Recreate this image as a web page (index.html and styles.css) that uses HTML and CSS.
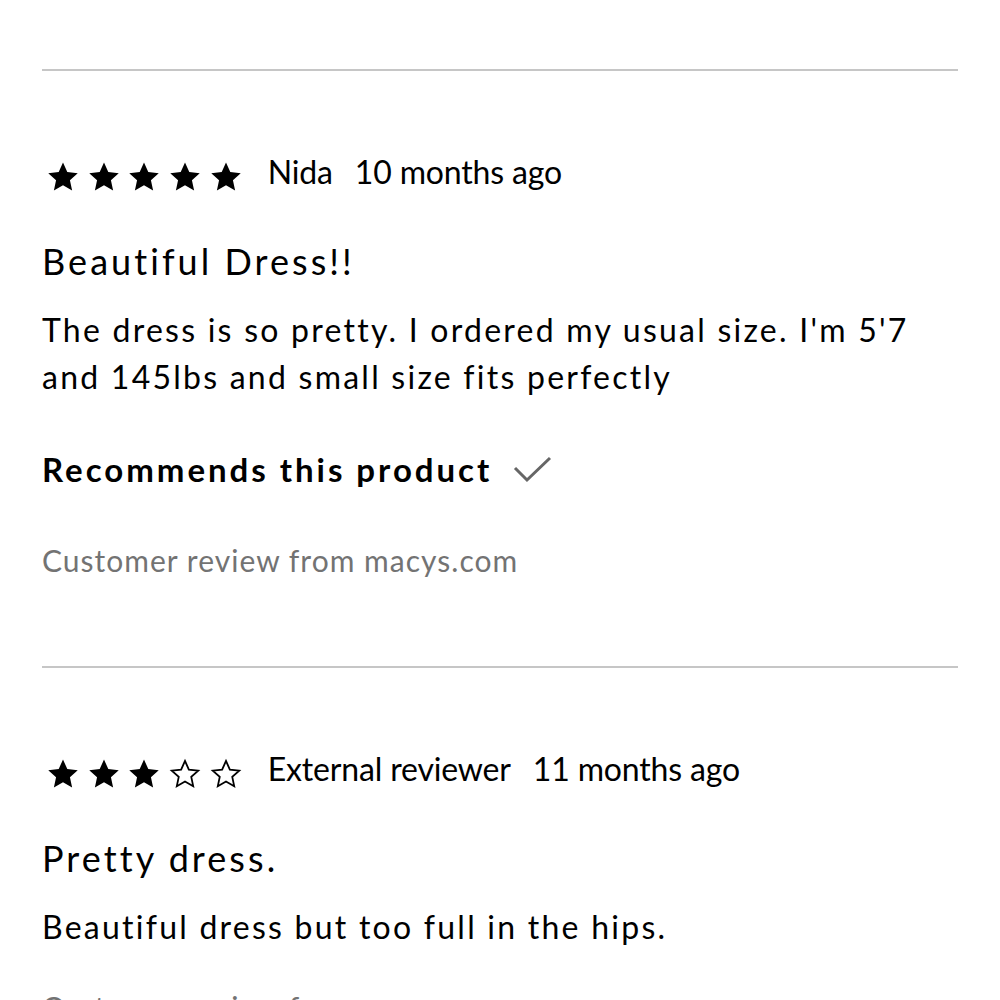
FILE: index.html
```html
<!DOCTYPE html>
<html lang="en">
<head>
<meta charset="utf-8">
<title>Reviews</title>
<link rel="stylesheet" href="styles.css">
</head>
<body>
<svg width="0" height="0" class="defs" aria-hidden="true">
  <defs>
    <path id="star-shape" d="M15 0.5 L19.29 10.09 L29.74 11.21 L21.94 18.26 L24.11 28.54 L15 23.3 L5.89 28.54 L8.06 18.26 L0.26 11.21 L10.71 10.09 Z"/>
  </defs>
</svg>
<main class="reviews">
  <div class="divider"></div>

  <article class="review">
    <div class="meta">
      <div class="stars" aria-label="5 out of 5 stars">
        <svg class="star full" viewBox="0 0 30 30"><use href="#star-shape"/></svg>
        <svg class="star full" viewBox="0 0 30 30"><use href="#star-shape"/></svg>
        <svg class="star full" viewBox="0 0 30 30"><use href="#star-shape"/></svg>
        <svg class="star full" viewBox="0 0 30 30"><use href="#star-shape"/></svg>
        <svg class="star full" viewBox="0 0 30 30"><use href="#star-shape"/></svg>
      </div>
      <span class="author">Nida</span>
      <span class="date">10 months ago</span>
    </div>
    <h2 class="title">Beautiful Dress!!</h2>
    <p class="body">The dress is so pretty. I ordered my usual size. I'm 5'7 and 145lbs and small size fits perfectly</p>
    <div class="recommend">
      <span>Recommends this product</span>
      <svg class="check" viewBox="0 0 40 28"><polyline points="2,12 14,24 37,2"/></svg>
    </div>
    <p class="source">Customer review from macys.com</p>
  </article>

  <div class="divider"></div>

  <article class="review second">
    <div class="meta">
      <div class="stars" aria-label="3 out of 5 stars">
        <svg class="star full" viewBox="0 0 30 30"><use href="#star-shape"/></svg>
        <svg class="star full" viewBox="0 0 30 30"><use href="#star-shape"/></svg>
        <svg class="star full" viewBox="0 0 30 30"><use href="#star-shape"/></svg>
        <svg class="star empty" viewBox="0 0 30 30"><use href="#star-shape"/></svg>
        <svg class="star empty" viewBox="0 0 30 30"><use href="#star-shape"/></svg>
      </div>
      <span class="author">External reviewer</span>
      <span class="date">11 months ago</span>
    </div>
    <h2 class="title">Pretty dress.</h2>
    <p class="body">Beautiful dress but too full in the hips.</p>
    <p class="source">Customer review from macys.com</p>
  </article>
</main>
</body>
</html>
```
FILE: styles.css
```css
html, body {
  margin: 0;
  padding: 0;
  background: #fff;
}

body {
  font-family: Lato, "Open Sans", sans-serif;
  color: #000;
  overflow: hidden;
}

.defs {
  position: absolute;
}

.reviews {
  padding: 69px 42px 0;
}

.divider {
  height: 2px;
  background: #c6c6c6;
}

.review {
  display: flex;
  flex-direction: column;
  padding-top: 80px;
  padding-bottom: 86px;
}

.review.second {
  padding-bottom: 0;
}

/* rating, author and date */
.meta {
  display: flex;
  align-items: center;
  height: 40px;
  font-size: 32px;
  letter-spacing: -0.005em;
}

.stars {
  display: flex;
  align-self: flex-start;
  gap: 10.7px;
  margin: 11px 27px 0 6px;
}

.star {
  width: 30px;
  height: 30px;
  overflow: visible;
}

.star.full use {
  fill: #000;
}

.star.empty use {
  fill: none;
  stroke: #000;
  stroke-width: 2;
  stroke-linejoin: miter;
  transform: scale(0.9);
  transform-origin: 15px 15px;
}

.author {
  margin-right: 22px;
}

.title {
  margin: 50px 0 0;
  font-weight: 400;
  font-size: 36px;
  line-height: 40px;
  letter-spacing: 0.085em;
}

.body {
  margin: 25px 0 0;
  font-size: 32px;
  line-height: 47px;
  letter-spacing: 0.07em;
}

.recommend {
  display: flex;
  align-items: center;
  margin-top: 49px;
  height: 40px;
  font-size: 33px;
  font-weight: 700;
  letter-spacing: 0.09em;
}

.check {
  width: 40px;
  height: 28px;
  margin-left: 21px;
  margin-top: 2px;
  fill: none;
  stroke: #666;
  stroke-width: 3;
}

.source {
  margin: 51px 0 0;
  font-size: 30px;
  line-height: 40px;
  color: #737373;
  letter-spacing: 0.034em;
}

.second .source {
  margin-top: 37px;
}
```
